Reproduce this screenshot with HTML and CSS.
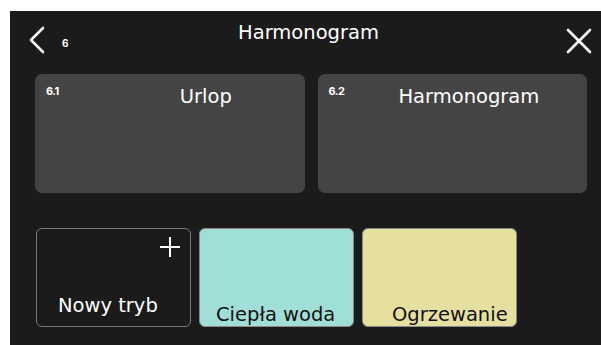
FILE: index.html
```html
<html>
    <head>
        <meta charset="utf-8">
        <link rel="stylesheet" href="styles.css">
    </head>

    <body>
        <div class="screen">
            <!-- header -->
            <div class="header">
                <div class="back">
                    <svg class="chevron" width="18" height="28" viewBox="0 0 18 28">
                        <path d="M15 2 L3 14 L15 26" fill="none" stroke="#fff" stroke-width="2.6" stroke-linecap="round" stroke-linejoin="round"/>
                    </svg>
                    <span class="back-num">6</span>
                </div>
                <div class="title">Harmonogram</div>
                <svg class="close" width="26" height="26" viewBox="0 0 26 26">
                    <path d="M2 2 L24 24 M24 2 L2 24" fill="none" stroke="#fff" stroke-width="2.6" stroke-linecap="round"/>
                </svg>
            </div>

            <!-- menu cards -->
            <div class="cards">
                <div class="card">
                    <span class="card-num">6.1</span>
                    <span class="card-label label-urlop">Urlop</span>
                </div>
                <div class="card">
                    <span class="card-num">6.2</span>
                    <span class="card-label label-harm">Harmonogram</span>
                </div>
            </div>

            <!-- modes -->
            <div class="modes">
                <div class="mode mode-new">
                    <svg class="plus" width="22" height="22" viewBox="0 0 22 22">
                        <path d="M11 1 V21 M1 11 H21" stroke="#fff" stroke-width="2"/>
                    </svg>
                    <span class="mode-label">Nowy tryb</span>
                </div>
                <div class="mode mode-water">
                    <span class="mode-label">Ciepła woda</span>
                </div>
                <div class="mode mode-heat">
                    <span class="mode-label">Ogrzewanie</span>
                </div>
            </div>
        </div>
    </body>
</html>
```

FILE: styles.css
```css
body {
    margin      : 11px 0 0 10px;
    background  : #fff;
    font-family : "DejaVu Sans", Inter, sans-serif;
}
.screen {
    height      : 334px;
    background  : #1b1b1b;
    color       : #fff;
    overflow    : hidden;
}

/* header */
.header {
    display     : flex;
    align-items : flex-start;
    height      : 52px;
    padding     : 0 9px 0 18px;
}
.back {
    display     : flex;
    align-items : flex-start;
    width       : 50px;
    padding-top : 15px;
}
.back-num {
    margin      : 11px 0 0 16px;
    font-family : Inter, sans-serif;
    font-size   : 10px;
    font-weight : 700;
}
.title {
    flex        : 1;
    text-align  : center;
    padding     : 11px 0 0 0;
    margin-left : -27px;
    font-size   : 19.5px;
    line-height : 22px;
}
.close {
    margin-top  : 17px;
}

/* top cards */
.cards {
    display     : flex;
    gap         : 13px;
    padding     : 11px 14px 0 25px;
}
.card {
    flex        : 1;
    height      : 119px;
    background  : #444;
    border-radius : 7px;
    display     : flex;
    align-items : flex-start;
    padding     : 10px 11px;
    box-sizing  : border-box;
}
.card-num {
    font-family : Inter, sans-serif;
    font-size   : 11px;
    font-weight : 700;
    letter-spacing : -0.5px;
}
.card-label {
    font-size   : 19.5px;
    line-height : 22px;
    margin-top  : 2px;
}
.label-urlop { margin-left: 121px; }
.label-harm  { margin-left: 54px; }

/* modes */
.modes {
    display     : flex;
    gap         : 8px;
    padding     : 35px 0 0 26px;
}
.mode {
    position    : relative;
    width       : 155px;
    height      : 99px;
    box-sizing  : border-box;
    border-radius : 6px;
    border      : 1px solid #888;
    display     : flex;
    align-items : flex-end;
}
.mode-label {
    font-size   : 19.5px;
    line-height : 22px;
}
.mode-new {
    border      : 1.5px solid #7a7a7a;
}
.mode-new .mode-label {
    padding     : 0 0 9px 21px;
}
.plus {
    position    : absolute;
    top         : 7px;
    right       : 9px;
}
.mode-water {
    background  : #a0dfd8;
    color       : #111;
}
.mode-water .mode-label {
    padding     : 0 0 0 16px;
}
.mode-heat {
    background  : #e6e0a0;
    color       : #111;
}
.mode-heat .mode-label {
    padding     : 0 0 0 29px;
}
```
